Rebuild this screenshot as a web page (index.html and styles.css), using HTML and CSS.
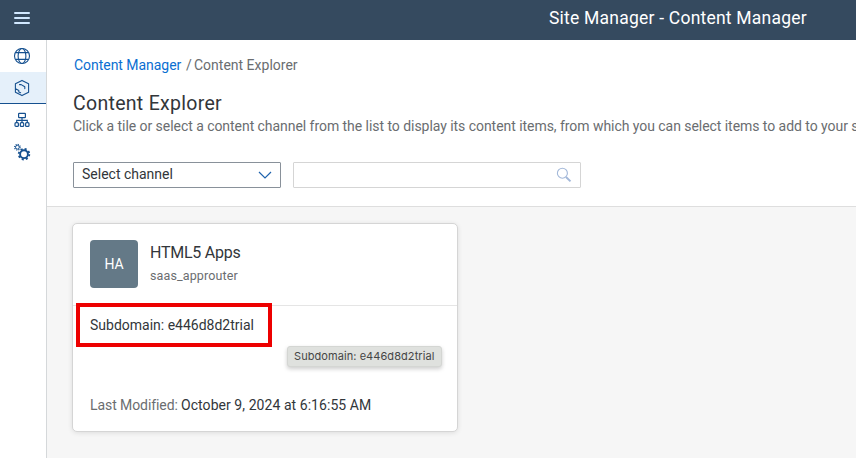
FILE: index.html
```html
<!DOCTYPE html>
<html lang="en">
<head>
<meta charset="utf-8">
<title>Site Manager - Content Manager</title>
<link rel="stylesheet" href="styles.css">
</head>
<body>
<header class="shell">
  <button class="menu" aria-label="Menu"><span></span><span></span><span></span></button>
  <div class="shell-title">Site Manager - Content Manager</div>
</header>
<div class="body">
  <nav class="side">
    <a class="nav-item"><svg width="18" height="18" viewBox="0 0 18 18"><g fill="none" stroke="currentColor" stroke-width="1.1"><circle cx="9" cy="9" r="7.5"/><ellipse cx="9" cy="9" rx="3.9" ry="7.5"/><path d="M2.4 5.6h13.2M2.4 12.4h13.2"/></g></svg></a>
    <a class="nav-item selected"><svg width="18" height="18" viewBox="0 0 18 18"><g fill="none" stroke="currentColor" stroke-width="1.1" stroke-linejoin="round" stroke-linecap="round"><path d="M9 1.400 15.600 4.800V13.200L9 16.600 2.400 13.200V4.800ZM6.500 5.600H8.200L11.800 7.800V9.600M2.600 9.800 5.800 11.500V13L7.600 13.800"/></g></svg></a>
    <a class="nav-item"><svg width="18" height="18" viewBox="0 0 18 18"><g fill="none" stroke="currentColor" stroke-width="1.2"><rect x="5.600" y="2.400" width="6.800" height="4.300" rx=".7"/><path d="M9 6.700v5M3.700 11.700V9.300h10.600v2.400"/><rect x="2" y="11.700" width="3.400" height="3.700" rx="1"/><rect x="7.300" y="11.700" width="3.400" height="3.700" rx="1"/><rect x="12.600" y="11.700" width="3.400" height="3.700" rx="1"/></g></svg></a>
    <a class="nav-item"><svg width="18" height="18" viewBox="0 0 18 18"><g fill="none" stroke="currentColor"><circle cx="4.400" cy="4.200" r="1.900" stroke-width="1"/><circle cx="4.400" cy="4.200" r="2.800" stroke-width="1.200" stroke-dasharray="1.100 1.099"/><circle cx="11" cy="11.200" r="3.900" stroke-width="1.900"/><circle cx="11" cy="11.200" r="5.300" stroke-width="1.800" stroke-dasharray="2.081 2.081"/></g></svg></a>
  </nav>
  <main class="page">
    <section class="page-head">
      <div class="crumbs"><a class="crumb-link">Content Manager</a><span class="slash">/</span><span class="crumb-now">Content Explorer</span></div>
      <h1 class="heading">Content Explorer</h1>
      <p class="desc">Click a tile or select a content channel from the list to display its content items, from which you can select items to add to your site.</p>
      <div class="filters">
        <div class="select"><span class="select-text">Select channel</span><svg width="14" height="8" viewBox="0 0 14 8"><path d="M1 1 7 7 13 1" fill="none" stroke="#1f63ad" stroke-width="1.200"/></svg></div>
        <div class="search"><svg width="16" height="16" viewBox="0 0 16 16"><g fill="none" stroke="#a3b8d9"><circle cx="6.400" cy="6.200" r="5" stroke-width="1.100"/><path d="M10 10 14.500 14.400" stroke-width="1.900"/></g></svg></div>
      </div>
    </section>
    <section class="content">
      <article class="card">
        <div class="card-head">
          <div class="avatar">HA</div>
          <div><div class="card-title">HTML5 Apps</div><div class="card-sub">saas_approuter</div></div>
        </div>
        <div class="card-body">
          <div class="subdomain">Subdomain: e446d8d2trial<span class="highlight"></span></div>
          <div class="modified"><span class="mod-label">Last Modified:</span><span class="mod-date">October 9, 2024 at 6:16:55 AM</span></div>
        </div>
        <div class="tooltip">Subdomain: e446d8d2trial</div>
      </article>
    </section>
  </main>
</div>
</body>
</html>
```
FILE: styles.css
```css
* { box-sizing: border-box; }
body {
  margin: 0; width: 856px; height: 458px; overflow: hidden;
  display: flex; flex-direction: column;
  font: 14px/18px Roboto, "Liberation Sans", sans-serif;
  color: #32363a; background: #fff;
}
.shell { height: 40px; flex: none; background: #354a5f; display: flex; align-items: center; padding-left: 14px; }
.menu { border: 0; padding: 0; margin: -4px 0 0; background: none; width: 16px; display: flex; flex-direction: column; gap: 3px; }
.menu span { height: 2px; background: #d1e8ff; border-radius: 1px; }
.shell-title { margin-left: 519px; margin-top: -4px; color: #fff; font-size: 17.500px; letter-spacing: .22px; line-height: 24px; white-space: nowrap; }
.body { flex: 1; display: flex; min-height: 0; }
.side { width: 47px; flex: none; border-right: 1px solid #d5d8da; }
.nav-item { height: 32px; padding-right: 2px; display: flex; align-items: center; justify-content: center; color: #15508f; }
.selected { background: #e5f0fa; border-bottom: 1px solid #15508f; }
.page { flex: 1; min-width: 0; display: flex; flex-direction: column; }
.page-head { height: 167px; padding: 16px 0 0 26px; border-bottom: 1px solid #dedede; overflow: hidden; }
.crumbs { display: flex; padding-left: 1px; color: #6a6d70; line-height: 18px; }
.crumb-link { color: #0a6ed1; width: 112px; letter-spacing: -.04px; }
.slash { width: 8px; }
.heading { margin: 18px 0 0; font-size: 19.500px; letter-spacing: .3px; line-height: 24px; font-weight: 400; }
.desc { margin: 1px 0 0; color: #6a6d70; line-height: 18px; letter-spacing: -.048px; white-space: nowrap; }
.filters { display: flex; gap: 12px; margin-top: 27px; }
.select { width: 208px; height: 26px; border: 1px solid #89919a; border-radius: 1px; display: flex; align-items: center; justify-content: space-between; padding: 0 8px; }
.select-text { padding-bottom: 2px; }
.search { width: 288px; height: 26px; border: 1px solid #d5d5d5; border-radius: 1px; display: flex; align-items: center; justify-content: flex-end; padding-right: 8px; }
.content { flex: 1; background: #f6f6f6; padding: 16px 0 0 25px; }
.card { position: relative; width: 386px; height: 209px; background: #fff; border: 1px solid #d5d5d5; border-radius: 5px; box-shadow: 0 1px 5px rgba(0,0,0,.1); }
.card-head { height: 82px; padding: 16px 17px; display: flex; gap: 12px; border-bottom: 1px solid #e5e5e5; }
.avatar { width: 48px; height: 48px; border-radius: 4px; background: #647987; color: #fff; display: flex; align-items: center; justify-content: center; }
.card-title { font-size: 16px; letter-spacing: -.25px; line-height: 20px; margin-top: 3px; }
.card-sub { font-size: 12.500px; letter-spacing: .12px; line-height: 16px; margin-top: 5px; color: #6a6d70; }
.card-body { padding: 10px 17px; }
.subdomain { position: relative; }
.highlight { position: absolute; left: -14px; top: -13px; width: 196px; height: 44px; border: 4px solid #ed0000; }
.modified { display: flex; margin-top: 62px; }
.mod-label { color: #6a6d70; width: 91px; letter-spacing: -.08px; }
.mod-date { letter-spacing: .06px; }
.tooltip { position: absolute; left: 214px; top: 122px; width: 155px; height: 21px; padding-left: 6px; background: #dfe1de; border: 1px solid #d4d6d3; border-radius: 3px; box-shadow: 0 2px 4px rgba(0,0,0,.2); font: 11px/19px Inter, sans-serif; letter-spacing: .07px; color: #454545; white-space: nowrap; }
```
